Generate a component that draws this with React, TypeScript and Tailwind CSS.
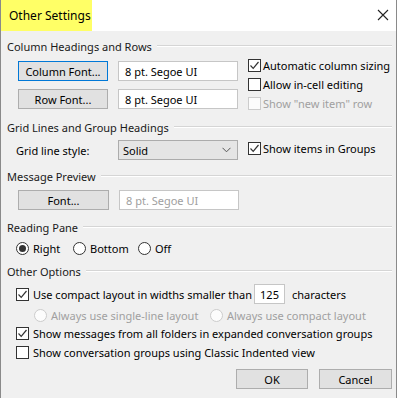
import React from "react";

const Check = ({ checked = false, disabled = false }: { checked?: boolean; disabled?: boolean }) => (
  <span
    className={`w-[13px] h-[13px] shrink-0 border flex items-center justify-center ${
      disabled ? "border-[#cccccc] bg-[#fcfcfc]" : "border-[#333333] bg-white"
    }`}
  >
    {checked && (
      <svg width="11" height="11" viewBox="0 0 11 11">
        <path d="M1.5 5.5 L4.2 8.3 L9.5 2" fill="none" stroke="#333333" strokeWidth="1.2" />
      </svg>
    )}
  </span>
);

const Radio = ({ selected = false, disabled = false }: { selected?: boolean; disabled?: boolean }) => (
  <span
    className={`w-[13px] h-[13px] shrink-0 rounded-full border flex items-center justify-center ${
      disabled ? "border-[#cccccc] bg-[#fcfcfc]" : "border-[#333333] bg-white"
    }`}
  >
    {selected && <span className="w-[7px] h-[7px] rounded-full bg-[#333333]" />}
  </span>
);

const Section = ({ title }: { title: string }) => (
  <div className="flex items-center h-[16px] gap-[5px]">
    <span className="text-[#1a1a1a]">{title}</span>
    <div className="flex-1 border-t border-b border-t-[#d5d5d5] border-b-white" />
  </div>
);

const Btn = ({ label, focused = false, w = "w-[90px]" }: { label: string; focused?: boolean; w?: string }) => (
  <div
    className={`${w} h-[20px] shrink-0 flex items-center justify-center bg-[#e1e1e1] border ${
      focused ? "border-[#0078d7]" : "border-[#adadad]"
    }`}
  >
    {label}
  </div>
);

const Field = ({ value, disabled = false }: { value: string; disabled?: boolean }) => (
  <div
    className={`w-[120px] h-[20px] shrink-0 flex items-center px-[6px] bg-white border border-[#c6c6c6] ${
      disabled ? "text-[#a0a0a0]" : ""
    }`}
  >
    {value}
  </div>
);

const CheckRow = ({
  label,
  checked,
  disabled,
}: {
  label: string;
  checked?: boolean;
  disabled?: boolean;
}) => (
  <div className={`h-[19px] flex items-center gap-[2px] ${disabled ? "text-[#a0a0a0]" : ""}`}>
    <Check checked={checked} disabled={disabled} />
    <span>{label}</span>
  </div>
);

export default function App() {
  return (
    <div className="w-[400px] h-[398px] bg-white overflow-hidden text-[11px] leading-none whitespace-nowrap text-black font-['Noto_Sans',sans-serif]">
      <div className="w-[397px] h-full border-x border-[#8a8a8a] bg-[#f0f0f0] flex flex-col">
        {/* title bar */}
        <div className="h-[31px] shrink-0 bg-white flex items-center justify-between">
          <div className="h-full w-[91px] bg-[#ffff66] flex items-center pl-[8px] text-[12px]">
            Other Settings
          </div>
          <svg width="12" height="12" viewBox="0 0 12 12" className="mr-[7px] mt-[-2px]">
            <path d="M1 1 L11 11 M11 1 L1 11" stroke="#222" strokeWidth="1.1" />
          </svg>
        </div>

        <div className="flex flex-col pl-[6px] pr-[4px] pt-[7px]">
          <Section title="Column Headings and Rows" />
          <div className="flex mt-[2px]">
            <div className="flex flex-col gap-[8px] pl-[11px] pt-[5px] w-[241px] shrink-0">
              <div className="flex gap-[10px]">
                <Btn label="Column Font..." focused />
                <Field value="8 pt. Segoe UI" />
              </div>
              <div className="flex gap-[10px]">
                <Btn label="Row Font..." />
                <Field value="8 pt. Segoe UI" />
              </div>
            </div>
            <div className="flex flex-col">
              <CheckRow label="Automatic column sizing" checked />
              <CheckRow label="Allow in-cell editing" />
              <CheckRow label={'Show "new item" row'} disabled />
            </div>
          </div>

          <div className="mt-[6px]">
            <Section title="Grid Lines and Group Headings" />
          </div>
          <div className="flex items-center mt-[5px] h-[20px]">
            <span className="pl-[9px] w-[111px] shrink-0">Grid line style:</span>
            <div className="w-[120px] h-[20px] shrink-0 flex items-center justify-between pl-[4px] pr-[6px] bg-[#e5e5e5] border border-[#acacac]">
              <span>Solid</span>
              <svg width="9" height="6" viewBox="0 0 9 6">
                <path d="M0.5 0.8 L4.5 4.8 L8.5 0.8" fill="none" stroke="#555" strokeWidth="1" />
              </svg>
            </div>
            <div className="ml-[10px] mt-[-4px]">
              <CheckRow label="Show items in Groups" checked />
            </div>
          </div>

          <div className="mt-[8px]">
            <Section title="Message Preview" />
          </div>
          <div className="flex gap-[10px] mt-[6px] pl-[11px]">
            <Btn label="Font..." w="w-[91px]" />
            <Field value="8 pt. Segoe UI" disabled />
          </div>

          <div className="mt-[9px]">
            <Section title="Reading Pane" />
          </div>
          <div className="flex items-center h-[18px] mt-[4px] pl-[9px]">
            <div className="flex items-center gap-[4px] w-[57px]">
              <Radio selected />
              <span>Right</span>
            </div>
            <div className="flex items-center gap-[4px] w-[65px]">
              <Radio />
              <span>Bottom</span>
            </div>
            <div className="flex items-center gap-[4px]">
              <Radio />
              <span>Off</span>
            </div>
          </div>

          <div className="mt-[6px]">
            <Section title="Other Options" />
          </div>
          <div className="flex items-center h-[20px] mt-[5px] pl-[9px] gap-[4px]">
            <Check checked />
            <span className="w-[217px] shrink-0">Use compact layout in widths smaller than</span>
            <div className="w-[31px] h-[20px] shrink-0 bg-white border border-[#c6c6c6] flex items-center justify-center">
              125
            </div>
            <span className="ml-[3px]">characters</span>
          </div>
          <div className="flex items-center h-[18px] mt-[2px] pl-[27px] text-[#a0a0a0]">
            <div className="flex items-center gap-[4px] w-[176px] shrink-0">
              <Radio disabled />
              <span>Always use single-line layout</span>
            </div>
            <div className="flex items-center gap-[4px]">
              <Radio disabled />
              <span>Always use compact layout</span>
            </div>
          </div>
          <div className="pl-[9px] flex flex-col">
            <div className="flex items-center h-[19px] gap-[4px]">
              <Check checked />
              <span>Show messages from all folders in expanded conversation groups</span>
            </div>
            <div className="flex items-center h-[19px] gap-[4px]">
              <Check />
              <span>Show conversation groups using Classic Indented view</span>
            </div>
          </div>

          <div className="flex justify-end gap-[11px] mt-[7px]">
            <Btn label="OK" w="w-[72px]" />
            <Btn label="Cancel" w="w-[73px]" />
          </div>
        </div>
      </div>
    </div>
  );
}
